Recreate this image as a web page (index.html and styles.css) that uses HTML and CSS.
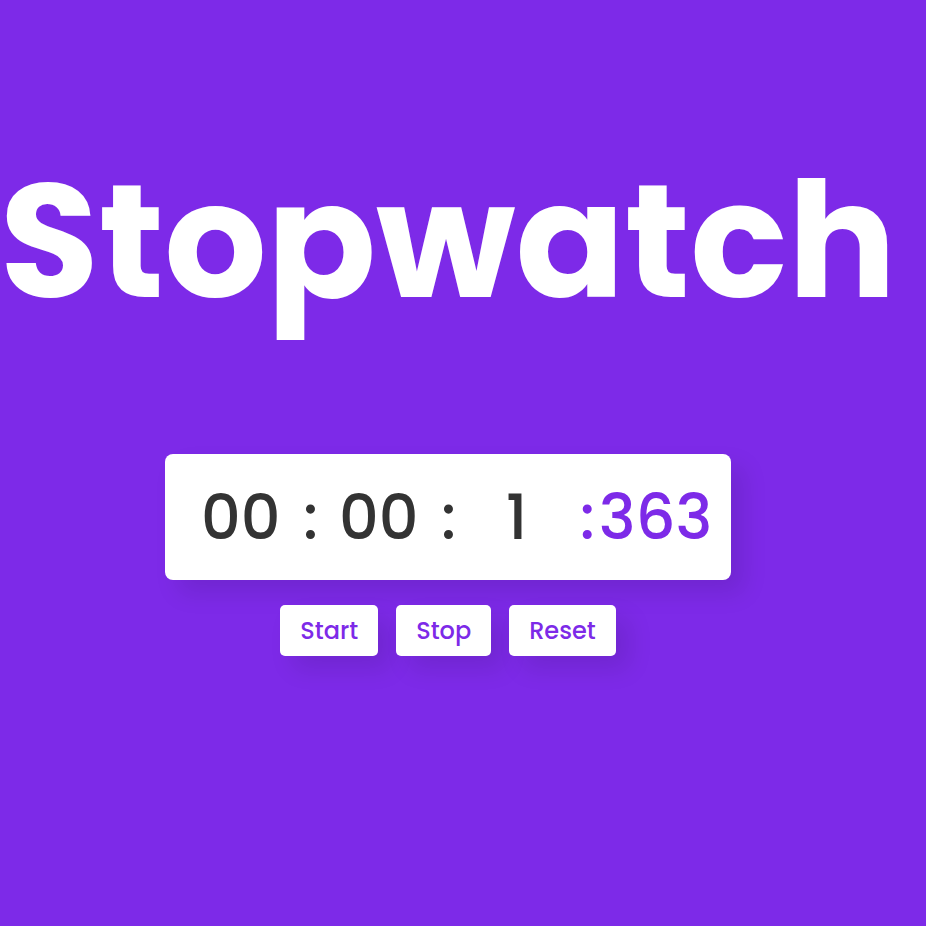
FILE: index.html
```html
<!DOCTYPE html>
<html lang="en">
<head>
<meta charset="utf-8">
<title>Stopwatch</title>
<link rel="stylesheet" href="styles.css">
</head>
<body>
<main class="stopwatch">
  <h1 class="title">Stopwatch</h1>
  <div class="display" role="timer">
    <span class="digits">00</span>
    <span class="colon">:</span>
    <span class="digits">00</span>
    <span class="colon">:</span>
    <span class="digits">1</span>
    <span class="millis"><span>:</span><span>363</span></span>
  </div>
  <div class="controls">
    <button class="control" type="button">Start</button>
    <button class="control" type="button">Stop</button>
    <button class="control" type="button">Reset</button>
  </div>
</main>
</body>
</html>
```
FILE: styles.css
```css
* {
  box-sizing: border-box;
}

body {
  margin: 0;
  min-height: 100vh;
  background: #7d2ae8;
  font-family: Poppins, Inter, "Open Sans", sans-serif;
}

.stopwatch {
  display: flex;
  flex-direction: column;
  align-items: center;
  padding: 120px 30px 0 0;
}

.title {
  margin: 0 0 92px;
  color: #fff;
  font-size: 161px;
  font-weight: 700;
  line-height: 242px;
}

.display {
  display: grid;
  grid-template-columns: 80px 58px 80px 58px 80px auto;
  align-items: center;
  justify-items: center;
  padding: 13px 19px 11px 36px;
  border-radius: 8px;
  background: #fff;
  box-shadow: 13px 13px 25px rgba(0, 0, 0, 0.1);
  color: #333;
  font-size: 62px;
  font-weight: 500;
  line-height: 102px;
}

.colon {
  padding-left: 2px;
}

.millis {
  display: flex;
  gap: 4px;
  padding-left: 23px;
  color: #7d2ae8;
}

.controls {
  display: flex;
  gap: 18px;
  margin-top: 25px;
}

.control {
  padding: 8px 20px;
  border: 0;
  border-radius: 5px;
  background: #fff;
  box-shadow: 13px 13px 25px rgba(0, 0, 0, 0.1);
  color: #7d2ae8;
  font: inherit;
  font-size: 24px;
  font-weight: 500;
  line-height: 35px;
  cursor: pointer;
}
```
